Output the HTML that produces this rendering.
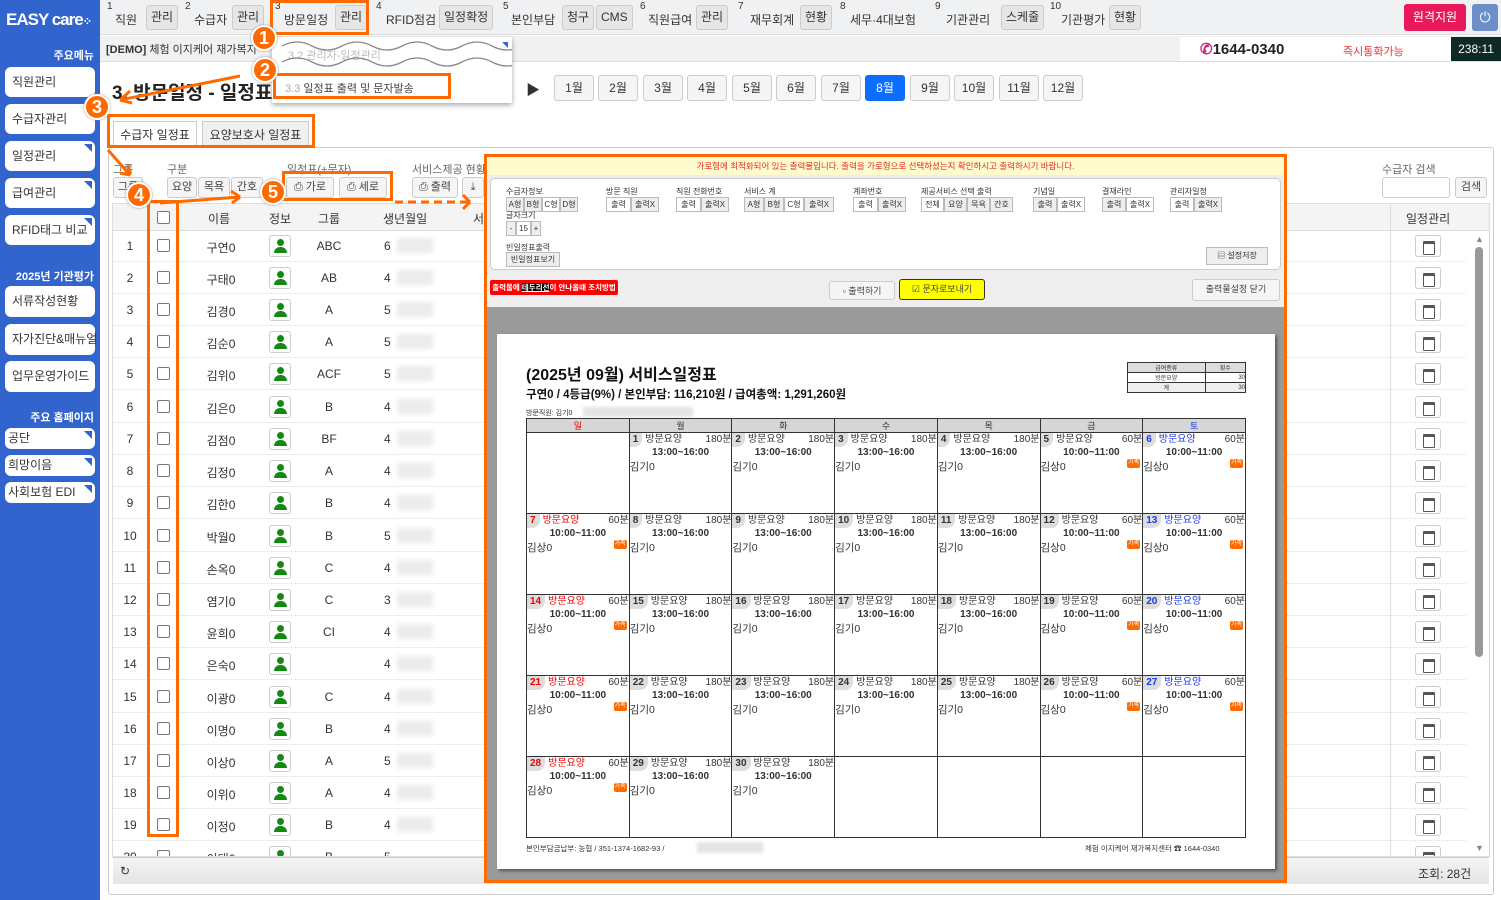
<!DOCTYPE html>
<html><head><meta charset="utf-8">
<style>
*{box-sizing:border-box;margin:0;padding:0}
body{width:1501px;height:900px;overflow:hidden;position:relative;background:#fff;font-family:"Liberation Sans","Noto Sans CJK KR",sans-serif;font-size:12px;color:#333;white-space:nowrap}
.a{position:absolute}
.side{left:0;top:0;width:100px;height:900px;background:#3164cc}
.sb{position:absolute;left:5px;width:90px;background:#fff;border-radius:6px;font-size:12px;color:#333;padding-left:7px}
.sb.t:after{content:"";position:absolute;right:3px;top:3px;border-left:8px solid transparent;border-top:8px solid #3164cc}
.sh{position:absolute;right:6px;color:#fff;font-weight:bold;font-size:11px}
.top{left:100px;top:0;width:1401px;height:35px;background:#f0f1f3;border-bottom:1px solid #ddd}
.mi{position:absolute;top:0;height:35px;font-size:12px;color:#333}
.mi sup{position:absolute;top:1px;font-size:10px}
.mi .l{position:absolute;top:11px}
.bt{position:absolute;top:5px;height:25px;background:#e6e6e6;border:1px solid #ccc;border-radius:3px;font-size:12px;line-height:23px;padding:0 4px}
.btn{position:absolute;background:#f5f5f5;border:1px solid #ccc;border-radius:3px;font-size:11px;line-height:18px;text-align:center;color:#444}
.mo{position:absolute;top:75px;width:40px;height:26px;background:#f5f5f5;border:1px solid #ccc;border-radius:3px;text-align:center;line-height:24px;font-size:12px}
.row{position:absolute;left:112px;width:1354px;height:32px;border-bottom:1px dotted #ddd;font-size:12px}
.row span{position:absolute;top:9px;text-align:center}
.cb{position:absolute;left:45px;top:9px;width:13px;height:13px;border:1px solid #777;border-radius:2px;background:#fff}
.pi{position:absolute;left:157px;top:5px;width:22px;height:22px;border:1px solid #ccc;border-radius:3px;background:#fff}
.pi:before{content:"";position:absolute;left:7px;top:3px;width:7px;height:7px;border-radius:50%;background:#128a12}
.pi:after{content:"";position:absolute;left:4px;top:11px;width:13px;height:6px;border-radius:6px 6px 0 0;background:#128a12}
.blur{position:absolute;left:285px;top:8px;width:36px;height:15px;background:#ececec;filter:blur(2px)}
.cal{position:absolute;left:1303px;top:5px;width:26px;height:22px;border:1px solid #ccc;border-radius:3px;background:#fff}
.cal:after{content:"";position:absolute;left:7px;top:5px;width:10px;height:10px;border:1.5px solid #555;border-top-width:3px;border-radius:1px}
.orng{border:3px solid #ff6a00}
.circ{position:absolute;width:26px;height:26px;border-radius:50%;background:#ff6a00;border:2px solid #fff;box-shadow:0 0 2px #888;color:#fff;font-weight:bold;font-size:18px;text-align:center;line-height:22px}
table.c{position:absolute;left:526px;top:418px;width:720px;border-collapse:collapse;table-layout:fixed}
table.c th{height:14px;background:#d6d6d6;border:1px solid #333;font-size:9px;font-weight:normal}
table.c td{height:81px;border:1px solid #333;vertical-align:top;font-size:10px;padding:0;position:relative}
.d{display:flex;justify-content:space-between;height:14px;line-height:14px}
.d b{background:#ddd;border-radius:0 0 8px 0;padding:0 4px 0 3px;font-size:10px}
.d i{font-style:normal;flex:1;padding-left:3px}
.tm{text-align:center;font-weight:bold;font-size:10px;line-height:12px}
.nm{line-height:16px;font-size:10.5px}
.bg{position:absolute;right:2px;top:26px;background:#ff6a00;color:#fff;font-size:6px;padding:0 1px;border-radius:2px;line-height:9px}
.r{color:#e00}.bl{color:#1a3ae8}
.ob{position:absolute;top:-1px;height:15px;border:1px solid #bbb;background:#eee;font-size:8px;line-height:13px;text-align:center}
.ol{position:absolute;font-size:8px;color:#333}
</style></head><body>

<div class="a side">
 <div class="a" style="left:6px;top:10px;color:#fff;font-weight:bold;font-size:17px;letter-spacing:-1px">EASY care<span style="font-size:11px">⁘</span></div>
 <div class="sh" style="top:47px">주요메뉴</div>
 <div class="sb" style="top:67px;height:30px;line-height:30px">직원관리</div>
 <div class="sb" style="top:104px;height:30px;line-height:30px">수급자관리</div>
 <div class="sb t" style="top:141px;height:30px;line-height:30px">일정관리</div>
 <div class="sb t" style="top:178px;height:30px;line-height:30px">급여관리</div>
 <div class="sb t" style="top:215px;height:30px;line-height:30px">RFID태그 비교</div>
 <div class="sh" style="top:268px">2025년 기관평가</div>
 <div class="sb" style="top:286px;height:31px;line-height:31px">서류작성현황</div>
 <div class="sb" style="top:324px;height:31px;line-height:31px">자가진단&amp;매뉴얼</div>
 <div class="sb" style="top:361px;height:31px;line-height:31px">업무운영가이드</div>
 <div class="sh" style="top:409px">주요 홈페이지</div>
 <div class="sb t" style="top:428px;height:21px;line-height:21px;padding-left:3px">공단</div>
 <div class="sb t" style="top:455px;height:21px;line-height:21px;padding-left:3px">희망이음</div>
 <div class="sb t" style="top:482px;height:21px;line-height:21px;padding-left:3px">사회보험 EDI</div>
</div>

<div class="a top">
 <div class="mi" style="left:7px"><sup>1</sup><span class="l" style="left:8px">직원</span><span class="bt" style="left:39px">관리</span></div>
 <div class="mi" style="left:85px"><sup>2</sup><span class="l" style="left:9px">수급자</span><span class="bt" style="left:47px">관리</span></div>
 <div class="mi" style="left:175px"><sup>3</sup><span class="l" style="left:9px">방문일정</span><span class="bt" style="left:60px">관리</span></div>
 <div class="mi" style="left:276px"><sup>4</sup><span class="l" style="left:10px">RFID점검</span><span class="bt" style="left:63px">일정확정</span></div>
 <div class="mi" style="left:403px"><sup>5</sup><span class="l" style="left:8px">본인부담</span><span class="bt" style="left:59px">청구</span><span class="bt" style="left:93px">CMS</span></div>
 <div class="mi" style="left:540px"><sup>6</sup><span class="l" style="left:8px">직원급여</span><span class="bt" style="left:56px">관리</span></div>
 <div class="mi" style="left:638px"><sup>7</sup><span class="l" style="left:12px">재무회계</span><span class="bt" style="left:62px">현황</span></div>
 <div class="mi" style="left:740px"><sup>8</sup><span class="l" style="left:10px">세무·4대보험</span></div>
 <div class="mi" style="left:835px"><sup>9</sup><span class="l" style="left:11px">기관관리</span><span class="bt" style="left:66px">스케줄</span></div>
 <div class="mi" style="left:950px"><sup>10</sup><span class="l" style="left:11px">기관평가</span><span class="bt" style="left:59px">현황</span></div>
 <div class="a" style="left:1304px;top:4px;width:62px;height:27px;background:#e8195a;color:#fff;border-radius:3px;text-align:center;line-height:27px;font-size:12px">원격지원</div>
 <div class="a" style="left:1372px;top:4px;width:26px;height:27px;background:#6c8fc9;color:#fff;border-radius:3px;text-align:center;line-height:27px;font-size:14px">⏻</div>
</div>
<div class="a orng" style="left:270px;top:0;width:99px;height:35px"></div>
<div class="a" style="left:100px;top:36px;width:1401px;height:26px;background:#f0f1f3;border-bottom:1px solid #ddd"></div>
<div class="a" style="left:106px;top:41px;font-size:11px"><b>[DEMO]</b> 체험 이지케어 재가복지</div>
<div class="a" style="left:1180px;top:37px;width:271px;height:24px;background:#fff"></div>
<div class="a" style="left:1200px;top:40px;font-weight:bold;font-size:15px;color:#222"><span style="color:#d0207a">✆</span>1644-0340</div>
<div class="a" style="left:1343px;top:43px;font-size:11px;color:#e33">즉시통화가능</div>
<div class="a" style="left:1451px;top:37px;width:50px;height:24px;background:#0d2a25;color:#fff;font-size:12px;text-align:center;line-height:24px">238:11</div>

<div class="a" style="left:112px;top:78px;font-size:19px;font-weight:bold;color:#222">3. 방문일정 - 일정표</div>
<div class="a" style="left:272px;top:37px;width:240px;height:66px;background:#fff;box-shadow:0 2px 5px rgba(0,0,0,.35)"></div>
<div class="a" style="left:288px;top:47px;font-size:11px;color:#bbb">3.2 관리자-일정관리</div>
<svg class="a" style="left:272px;top:40px" width="240" height="28"><path d="M10 6 q15 -8 30 0 t30 0 t30 0 t30 0 t30 0 t30 0 t30 0 t30 0 M10 22 q15 -8 30 0 t30 0 t30 0 t30 0 t30 0 t30 0 t30 0 t30 0" fill="none" stroke="#888" stroke-width="1.3"/><path d="M230 2 l6 0 0 6z" fill="#3366dd"/></svg>
<div class="a" style="left:285px;top:80px;font-size:11px;color:#444"><span style="color:#aaa">3.3</span> 일정표 출력 및 문자발송</div>
<div class="a orng" style="left:273px;top:73px;width:178px;height:26px"></div>
<div class="a" style="left:526px;top:80px;font-size:14px">▶</div>

<div class="mo" style="left:554px">1월</div><div class="mo" style="left:598px">2월</div><div class="mo" style="left:643px">3월</div><div class="mo" style="left:687px">4월</div><div class="mo" style="left:732px">5월</div><div class="mo" style="left:776px">6월</div><div class="mo" style="left:821px">7월</div><div class="mo" style="left:865px;background:#0d6efd;color:#fff;border-color:#0d6efd">8월</div><div class="mo" style="left:910px">9월</div><div class="mo" style="left:954px">10월</div><div class="mo" style="left:999px">11월</div><div class="mo" style="left:1043px">12월</div>

<div class="a" style="left:108px;top:147px;width:1386px;height:748px;border:1px solid #ccc;border-radius:3px"></div>
<div class="a" style="left:113px;top:121px;width:84px;height:26px;border:1px solid #ccc;border-bottom:none;background:#fff;text-align:center;line-height:26px;font-size:12px">수급자 일정표</div>
<div class="a" style="left:202px;top:121px;width:107px;height:26px;border:1px solid #ccc;background:#f0f0f0;text-align:center;line-height:26px;font-size:12px">요양보호사 일정표</div>
<div class="a orng" style="left:107px;top:114px;width:208px;height:34px"></div>

<div class="a" style="left:113px;top:161px;font-size:11px;color:#666">그룹</div>
<div class="a" style="left:167px;top:161px;font-size:11px;color:#666">구분</div>
<div class="a" style="left:287px;top:161px;font-size:11px;color:#666">일정표(+문자)</div>
<div class="a" style="left:412px;top:161px;font-size:11px;color:#666">서비스제공 현황</div>
<div class="btn" style="left:113px;top:177px;width:30px;height:21px">그룹</div>
<div class="btn" style="left:167px;top:177px;width:30px;height:21px">요양</div>
<div class="btn" style="left:198px;top:177px;width:32px;height:21px">목욕</div>
<div class="btn" style="left:231px;top:177px;width:32px;height:21px">간호</div>
<div class="btn" style="left:286px;top:177px;width:48px;height:21px">⎙ 가로</div>
<div class="btn" style="left:339px;top:177px;width:48px;height:21px">⎙ 세로</div>
<div class="btn" style="left:412px;top:177px;width:46px;height:21px">⎙ 출력</div>
<div class="btn" style="left:462px;top:177px;width:22px;height:21px">⤓</div>
<div class="a orng" style="left:282px;top:171px;width:111px;height:30px"></div>
<div class="a" style="left:1382px;top:161px;font-size:11px;color:#666">수급자 검색</div>
<div class="a" style="left:1382px;top:177px;width:68px;height:21px;border:1px solid #ccc;border-radius:3px"></div>
<div class="btn" style="left:1455px;top:177px;width:32px;height:21px">검색</div>

<!-- grid -->
<div class="a" style="left:112px;top:203px;width:1378px;height:654px;border:1px solid #ddd"></div>
<div class="a" style="left:113px;top:204px;width:1376px;height:27px;background:#f4f4f4;border-bottom:1px solid #ddd;font-size:12px">
 <div class="cb" style="left:44px;top:7px"></div>
 <span class="a" style="left:95px;top:6px">이름</span><span class="a" style="left:156px;top:6px">정보</span><span class="a" style="left:205px;top:6px">그룹</span><span class="a" style="left:270px;top:6px">생년월일</span><span class="a" style="left:360px;top:6px">서</span>
 <span class="a" style="left:1293px;top:6px">일정관리</span>
</div>
<div class="a" style="left:1390px;top:204px;width:1px;height:652px;background:#ddd"></div>

<div class="row" style="top:230px"><span style="left:10px;width:16px">1</span><div class="cb"></div><span style="left:68px;width:82px">구연0</span><div class="pi"></div><span style="left:186px;width:62px">ABC</span><span style="left:272px">6</span><div class="blur"></div><div class="cal"></div></div>
<div class="row" style="top:262px"><span style="left:10px;width:16px">2</span><div class="cb"></div><span style="left:68px;width:82px">구태0</span><div class="pi"></div><span style="left:186px;width:62px">AB</span><span style="left:272px">4</span><div class="blur"></div><div class="cal"></div></div>
<div class="row" style="top:294px"><span style="left:10px;width:16px">3</span><div class="cb"></div><span style="left:68px;width:82px">김경0</span><div class="pi"></div><span style="left:186px;width:62px">A</span><span style="left:272px">5</span><div class="blur"></div><div class="cal"></div></div>
<div class="row" style="top:326px"><span style="left:10px;width:16px">4</span><div class="cb"></div><span style="left:68px;width:82px">김순0</span><div class="pi"></div><span style="left:186px;width:62px">A</span><span style="left:272px">5</span><div class="blur"></div><div class="cal"></div></div>
<div class="row" style="top:358px"><span style="left:10px;width:16px">5</span><div class="cb"></div><span style="left:68px;width:82px">김위0</span><div class="pi"></div><span style="left:186px;width:62px">ACF</span><span style="left:272px">5</span><div class="blur"></div><div class="cal"></div></div>
<div class="row" style="top:391px"><span style="left:10px;width:16px">6</span><div class="cb"></div><span style="left:68px;width:82px">김은0</span><div class="pi"></div><span style="left:186px;width:62px">B</span><span style="left:272px">4</span><div class="blur"></div><div class="cal"></div></div>
<div class="row" style="top:423px"><span style="left:10px;width:16px">7</span><div class="cb"></div><span style="left:68px;width:82px">김점0</span><div class="pi"></div><span style="left:186px;width:62px">BF</span><span style="left:272px">4</span><div class="blur"></div><div class="cal"></div></div>
<div class="row" style="top:455px"><span style="left:10px;width:16px">8</span><div class="cb"></div><span style="left:68px;width:82px">김정0</span><div class="pi"></div><span style="left:186px;width:62px">A</span><span style="left:272px">4</span><div class="blur"></div><div class="cal"></div></div>
<div class="row" style="top:487px"><span style="left:10px;width:16px">9</span><div class="cb"></div><span style="left:68px;width:82px">김한0</span><div class="pi"></div><span style="left:186px;width:62px">B</span><span style="left:272px">4</span><div class="blur"></div><div class="cal"></div></div>
<div class="row" style="top:520px"><span style="left:6px;width:24px">10</span><div class="cb"></div><span style="left:68px;width:82px">박월0</span><div class="pi"></div><span style="left:186px;width:62px">B</span><span style="left:272px">5</span><div class="blur"></div><div class="cal"></div></div>
<div class="row" style="top:552px"><span style="left:6px;width:24px">11</span><div class="cb"></div><span style="left:68px;width:82px">손옥0</span><div class="pi"></div><span style="left:186px;width:62px">C</span><span style="left:272px">4</span><div class="blur"></div><div class="cal"></div></div>
<div class="row" style="top:584px"><span style="left:6px;width:24px">12</span><div class="cb"></div><span style="left:68px;width:82px">염기0</span><div class="pi"></div><span style="left:186px;width:62px">C</span><span style="left:272px">3</span><div class="blur"></div><div class="cal"></div></div>
<div class="row" style="top:616px"><span style="left:6px;width:24px">13</span><div class="cb"></div><span style="left:68px;width:82px">윤희0</span><div class="pi"></div><span style="left:186px;width:62px">CI</span><span style="left:272px">4</span><div class="blur"></div><div class="cal"></div></div>
<div class="row" style="top:648px"><span style="left:6px;width:24px">14</span><div class="cb"></div><span style="left:68px;width:82px">은숙0</span><div class="pi"></div><span style="left:186px;width:62px"></span><span style="left:272px">4</span><div class="blur"></div><div class="cal"></div></div>
<div class="row" style="top:681px"><span style="left:6px;width:24px">15</span><div class="cb"></div><span style="left:68px;width:82px">이광0</span><div class="pi"></div><span style="left:186px;width:62px">C</span><span style="left:272px">4</span><div class="blur"></div><div class="cal"></div></div>
<div class="row" style="top:713px"><span style="left:6px;width:24px">16</span><div class="cb"></div><span style="left:68px;width:82px">이명0</span><div class="pi"></div><span style="left:186px;width:62px">B</span><span style="left:272px">4</span><div class="blur"></div><div class="cal"></div></div>
<div class="row" style="top:745px"><span style="left:6px;width:24px">17</span><div class="cb"></div><span style="left:68px;width:82px">이상0</span><div class="pi"></div><span style="left:186px;width:62px">A</span><span style="left:272px">5</span><div class="blur"></div><div class="cal"></div></div>
<div class="row" style="top:777px"><span style="left:6px;width:24px">18</span><div class="cb"></div><span style="left:68px;width:82px">이위0</span><div class="pi"></div><span style="left:186px;width:62px">A</span><span style="left:272px">4</span><div class="blur"></div><div class="cal"></div></div>
<div class="row" style="top:809px"><span style="left:6px;width:24px">19</span><div class="cb"></div><span style="left:68px;width:82px">이정0</span><div class="pi"></div><span style="left:186px;width:62px">B</span><span style="left:272px">4</span><div class="blur"></div><div class="cal"></div></div>
<div class="row" style="top:841px;height:16px;overflow:hidden"><span style="left:6px;width:24px">20</span><div class="cb"></div><span style="left:68px;width:82px">이태0</span><div class="pi"></div><span style="left:186px;width:62px">B</span><span style="left:272px">5</span><div class="cal"></div></div>
<div class="a orng" style="left:147px;top:200px;width:32px;height:637px"></div>
<div class="a" style="left:1475px;top:234px;font-size:9px;color:#888">▲</div>
<div class="a" style="left:1475px;top:247px;width:8px;height:410px;background:#999;border-radius:4px"></div>
<div class="a" style="left:1475px;top:843px;font-size:9px;color:#888">▼</div>
<div class="a" style="left:113px;top:857px;width:1376px;height:27px;background:linear-gradient(#f4f4f4,#e4e4e4);border-top:1px solid #ccc"></div>
<div class="a" style="left:120px;top:864px;font-size:12px">↻</div>
<div class="a" style="left:1418px;top:865px;font-size:12px">조회: 28건</div>

<!-- overlay -->
<div class="a" style="left:484px;top:154px;width:803px;height:729px;background:#9a9a9a;border:3px solid #ff6a00"></div>
<div class="a" style="left:487px;top:157px;width:797px;height:18px;background:#fffbcf;color:#e03020;font-size:8.5px;text-align:center;line-height:18px">가로형에 최적화되어 있는 출력물입니다. 출력을 가로형으로 선택하셨는지 확인하시고 출력하시기 바랍니다.</div>
<div class="a" style="left:487px;top:175px;width:797px;height:132px;background:#eee"></div>
<div class="a" style="left:490px;top:178px;width:791px;height:92px;background:#fff;border:1px solid #ccc;border-radius:5px">
 <div class="ol" style="left:15px;top:7px">수급자정보</div>
 <div class="ob" style="left:15px;top:18px;width:18px">A형</div><div class="ob" style="left:33px;top:18px;width:18px">B형</div><div class="ob" style="left:51px;top:18px;width:18px;background:#fff">C형</div><div class="ob" style="left:69px;top:18px;width:18px">D형</div>
 <div class="ol" style="left:115px;top:7px">방문 직원</div>
 <div class="ob" style="left:115px;top:18px;width:25px;background:#fff">출력</div><div class="ob" style="left:140px;top:18px;width:28px">출력X</div>
 <div class="ol" style="left:185px;top:7px">직원 전화번호</div>
 <div class="ob" style="left:185px;top:18px;width:25px;background:#fff">출력</div><div class="ob" style="left:210px;top:18px;width:28px">출력X</div>
 <div class="ol" style="left:253px;top:7px">서비스 계</div>
 <div class="ob" style="left:253px;top:18px;width:20px">A형</div><div class="ob" style="left:273px;top:18px;width:20px">B형</div><div class="ob" style="left:293px;top:18px;width:20px;background:#fff">C형</div><div class="ob" style="left:313px;top:18px;width:30px">출력X</div>
 <div class="ol" style="left:362px;top:7px">계좌번호</div>
 <div class="ob" style="left:362px;top:18px;width:25px;background:#fff">출력</div><div class="ob" style="left:387px;top:18px;width:28px">출력X</div>
 <div class="ol" style="left:430px;top:7px">제공서비스 선택 출력</div>
 <div class="ob" style="left:430px;top:18px;width:23px;background:#fff">전체</div><div class="ob" style="left:453px;top:18px;width:23px">요양</div><div class="ob" style="left:476px;top:18px;width:23px">목욕</div><div class="ob" style="left:499px;top:18px;width:23px">간호</div>
 <div class="ol" style="left:542px;top:7px">기념일</div>
 <div class="ob" style="left:542px;top:18px;width:24px">출력</div><div class="ob" style="left:566px;top:18px;width:28px;background:#fff">출력X</div>
 <div class="ol" style="left:611px;top:7px">결재라인</div>
 <div class="ob" style="left:611px;top:18px;width:24px">출력</div><div class="ob" style="left:635px;top:18px;width:28px;background:#fff">출력X</div>
 <div class="ol" style="left:679px;top:7px">관리자일정</div>
 <div class="ob" style="left:679px;top:18px;width:24px;background:#fff">출력</div><div class="ob" style="left:703px;top:18px;width:28px">출력X</div>
 <div class="ol" style="left:15px;top:31px">글자크기</div>
 <div class="ob" style="left:15px;top:42px;width:10px">-</div><div class="ob" style="left:25px;top:42px;width:15px;background:#fff">15</div><div class="ob" style="left:40px;top:42px;width:10px">+</div>
 <div class="ol" style="left:15px;top:63px">빈일정표출력</div>
 <div class="ob" style="left:15px;top:73px;width:54px">빈일정표보기</div>
 <div class="ob" style="left:715px;top:68px;width:62px;height:18px;line-height:16px">▤ 설정저장</div>
</div>
<div class="a" style="left:490px;top:280px;width:128px;height:15px;background:#f00;color:#fff;font-size:7.5px;font-weight:bold;line-height:15px;text-align:center;border-radius:2px">출력물에 <u style="background:#000">테두리선</u>이 안나올때 조치방법</div>
<div class="btn" style="left:829px;top:281px;width:66px;height:19px;font-size:9px">▫ 출력하기</div>
<div class="btn" style="left:899px;top:279px;width:86px;height:21px;font-size:9px;background:#ffff00;border-color:#333">☑ 문자로보내기</div>
<div class="btn" style="left:1192px;top:279px;width:88px;height:22px;font-size:9px">출력물설정 닫기</div>
<div class="a" style="left:497px;top:334px;width:778px;height:535px;background:#fff;box-shadow:2px 2px 3px #555"></div>

<div class="a" style="left:526px;top:361px;font-size:16px;font-weight:bold;color:#111">(2025년 09월) 서비스일정표</div>
<div class="a" style="left:526px;top:386px;font-size:11.5px;font-weight:bold;color:#111">구연0 / 4등급(9%) / 본인부담: 116,210원 / 급여총액: 1,291,260원</div>
<div class="a" style="left:526px;top:408px;font-size:7px">방문직원: 김기0</div>
<div class="a" style="left:583px;top:407px;width:110px;height:10px;background:#e4e4e4;filter:blur(1.5px)"></div>
<table class="a" style="left:1127px;top:362px;width:119px;border-collapse:collapse;font-size:6px;text-align:center">
<tr style="background:#ddd"><td style="border:1px solid #333">급여종류</td><td style="border:1px solid #333">횟수</td></tr>
<tr><td style="border:1px solid #333">방문요양</td><td style="border:1px solid #333;text-align:right">30</td></tr>
<tr style="background:#eee"><td style="border:1px solid #333">계</td><td style="border:1px solid #333;text-align:right">30</td></tr></table>

<table class="c">
<tr><th class="r">일</th><th>월</th><th>화</th><th>수</th><th>목</th><th>금</th><th class="bl">토</th></tr>
<tr><td></td>
<td><div class="d"><b>1</b><i>방문요양</i>180분</div><div class="tm">13:00~16:00</div><div class="nm">김기0</div></td>
<td><div class="d"><b>2</b><i>방문요양</i>180분</div><div class="tm">13:00~16:00</div><div class="nm">김기0</div></td>
<td><div class="d"><b>3</b><i>방문요양</i>180분</div><div class="tm">13:00~16:00</div><div class="nm">김기0</div></td>
<td><div class="d"><b>4</b><i>방문요양</i>180분</div><div class="tm">13:00~16:00</div><div class="nm">김기0</div></td>
<td><div class="d"><b>5</b><i>방문요양</i>60분</div><div class="tm">10:00~11:00</div><div class="nm">김상0</div><span class="bg">가족</span></td>
<td><div class="d"><b class="bl">6</b><i class="bl">방문요양</i>60분</div><div class="tm">10:00~11:00</div><div class="nm">김상0</div><span class="bg">가족</span></td></tr>
<tr>
<td><div class="d"><b class="r">7</b><i class="r">방문요양</i>60분</div><div class="tm">10:00~11:00</div><div class="nm">김상0</div><span class="bg">가족</span></td>
<td><div class="d"><b>8</b><i>방문요양</i>180분</div><div class="tm">13:00~16:00</div><div class="nm">김기0</div></td>
<td><div class="d"><b>9</b><i>방문요양</i>180분</div><div class="tm">13:00~16:00</div><div class="nm">김기0</div></td>
<td><div class="d"><b>10</b><i>방문요양</i>180분</div><div class="tm">13:00~16:00</div><div class="nm">김기0</div></td>
<td><div class="d"><b>11</b><i>방문요양</i>180분</div><div class="tm">13:00~16:00</div><div class="nm">김기0</div></td>
<td><div class="d"><b>12</b><i>방문요양</i>60분</div><div class="tm">10:00~11:00</div><div class="nm">김상0</div><span class="bg">가족</span></td>
<td><div class="d"><b class="bl">13</b><i class="bl">방문요양</i>60분</div><div class="tm">10:00~11:00</div><div class="nm">김상0</div><span class="bg">가족</span></td></tr>
<tr>
<td><div class="d"><b class="r">14</b><i class="r">방문요양</i>60분</div><div class="tm">10:00~11:00</div><div class="nm">김상0</div><span class="bg">가족</span></td>
<td><div class="d"><b>15</b><i>방문요양</i>180분</div><div class="tm">13:00~16:00</div><div class="nm">김기0</div></td>
<td><div class="d"><b>16</b><i>방문요양</i>180분</div><div class="tm">13:00~16:00</div><div class="nm">김기0</div></td>
<td><div class="d"><b>17</b><i>방문요양</i>180분</div><div class="tm">13:00~16:00</div><div class="nm">김기0</div></td>
<td><div class="d"><b>18</b><i>방문요양</i>180분</div><div class="tm">13:00~16:00</div><div class="nm">김기0</div></td>
<td><div class="d"><b>19</b><i>방문요양</i>60분</div><div class="tm">10:00~11:00</div><div class="nm">김상0</div><span class="bg">가족</span></td>
<td><div class="d"><b class="bl">20</b><i class="bl">방문요양</i>60분</div><div class="tm">10:00~11:00</div><div class="nm">김상0</div><span class="bg">가족</span></td></tr>
<tr>
<td><div class="d"><b class="r">21</b><i class="r">방문요양</i>60분</div><div class="tm">10:00~11:00</div><div class="nm">김상0</div><span class="bg">가족</span></td>
<td><div class="d"><b>22</b><i>방문요양</i>180분</div><div class="tm">13:00~16:00</div><div class="nm">김기0</div></td>
<td><div class="d"><b>23</b><i>방문요양</i>180분</div><div class="tm">13:00~16:00</div><div class="nm">김기0</div></td>
<td><div class="d"><b>24</b><i>방문요양</i>180분</div><div class="tm">13:00~16:00</div><div class="nm">김기0</div></td>
<td><div class="d"><b>25</b><i>방문요양</i>180분</div><div class="tm">13:00~16:00</div><div class="nm">김기0</div></td>
<td><div class="d"><b>26</b><i>방문요양</i>60분</div><div class="tm">10:00~11:00</div><div class="nm">김상0</div><span class="bg">가족</span></td>
<td><div class="d"><b class="bl">27</b><i class="bl">방문요양</i>60분</div><div class="tm">10:00~11:00</div><div class="nm">김상0</div><span class="bg">가족</span></td></tr>
<tr>
<td><div class="d"><b class="r">28</b><i class="r">방문요양</i>60분</div><div class="tm">10:00~11:00</div><div class="nm">김상0</div><span class="bg">가족</span></td>
<td><div class="d"><b>29</b><i>방문요양</i>180분</div><div class="tm">13:00~16:00</div><div class="nm">김기0</div></td>
<td><div class="d"><b>30</b><i>방문요양</i>180분</div><div class="tm">13:00~16:00</div><div class="nm">김기0</div></td>
<td></td><td></td><td></td><td></td></tr>
</table>
<div class="a" style="left:526px;top:843px;font-size:7.5px">본인부담금납부: 농협 / 351-1374-1682-93 /</div>
<div class="a" style="left:697px;top:842px;width:66px;height:11px;background:#e4e4e4;filter:blur(1.5px)"></div>
<div class="a" style="left:1085px;top:843px;font-size:7.5px">체험 이지케어 재가복지센터 ☎ 1644-0340</div>

<!-- annotations -->
<svg class="a" style="left:0;top:0" width="1501" height="900">
<g stroke="#ff6a00" stroke-width="3" fill="none">
<path d="M240 76 L120 100"/><path d="M120 100 l10 -9 M120 100 l12 3"/>
<path d="M108 150 L130 175"/><path d="M130 175 l-2 -10 M130 175 l-10 -2"/>
<path d="M160 203 L240 197"/><path d="M240 197 l-9 -6 M240 197 l-8 6"/>
<path d="M395 202 L470 202" stroke-dasharray="8 5"/><path d="M470 202 l-7 -7 M470 202 l-7 7"/>
</g></svg>
<div class="circ" style="left:251px;top:25px">1</div>
<div class="circ" style="left:252px;top:57px">2</div>
<div class="circ" style="left:84px;top:94px">3</div>
<div class="circ" style="left:126px;top:182px">4</div>
<div class="circ" style="left:260px;top:179px">5</div>
</body></html>
